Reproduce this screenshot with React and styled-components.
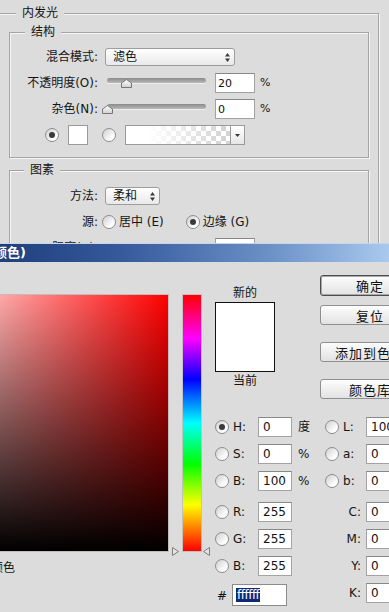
import React from "react";
import styled, { createGlobalStyle } from "styled-components";

const GlobalStyle = createGlobalStyle`
  html, body {
    margin: 0;
    padding: 0;
    overflow: hidden;
    background: #dcdcdc;
  }
  body {
    font-family: "DejaVu Sans", "Noto Sans CJK SC", sans-serif;
    font-size: 12px;
    line-height: 16px;
    color: #141414;
  }
  * { box-sizing: border-box; }
`;

const Screen = styled.div`
  width: 389px;
  height: 612px;
  overflow: hidden;
  display: flex;
  flex-direction: column;
  background: #dcdcdc;
`;

/* layer style dialog, behind the picker */

const LayerPanel = styled.section`
  flex: none;
  height: 243px;
  overflow: hidden;
  padding-top: 5px;
`;

const Group = styled.fieldset`
  margin: ${p => (p.$outer ? "0 0 0 -10px" : `${p.$mt || 0}px 0 0 0`)};
  width: ${p => (p.$outer ? 389 : 360)}px;
  min-width: 0;
  padding: ${p => p.$pad};
  border: 1px solid #a4a4a4;
  box-shadow: 1px 1px 0 #f6f6f6, inset 1px 1px 0 #f6f6f6;
`;

const Legend = styled.legend`
  margin-left: ${p => p.$offset}px;
  padding: 0 6px;
  font-size: 12px;
  line-height: 16px;
  background: #dcdcdc;
`;

const Row = styled.div`
  display: flex;
  align-items: center;
  height: 26px;
  padding-left: ${p => p.$indent || 0}px;
`;

const Label = styled.span`
  flex: none;
  width: 88px;
  margin-right: 7px;
  text-align: right;
  white-space: nowrap;
`;

const Select = styled.div`
  flex: none;
  width: ${p => p.$w}px;
  height: 18px;
  display: flex;
  align-items: center;
  justify-content: space-between;
  padding: 0 4px 0 7px;
  border: 1px solid #9d9d9d;
  border-radius: 3px;
  background: linear-gradient(#ffffff, #e9e9e9);
`;

const Track = styled.div`
  position: relative;
  flex: none;
  width: 99px;
  height: 5px;
  margin: 0 0 6px 2px;
  border-radius: 3px;
  background: linear-gradient(#8a8a8a, #b9b9b9);
  box-shadow: 0 1px 0 #efefef;
`;

const Thumb = styled.svg`
  position: absolute;
  top: 1px;
`;

const ValueBox = styled.input`
  flex: none;
  width: 40px;
  height: 20px;
  margin: 0 0 0 9px;
  padding: 0 0 0 2px;
  border: 1px solid #a2a2a2;
  border-top-color: #878787;
  background: #fff;
  font: 11px "DejaVu Sans", sans-serif;
  color: #111;
  outline: none;
`;

const Percent = styled.span`
  margin-left: 5px;
  font-size: 11px;
`;

const Radio = styled.span`
  flex: none;
  width: 14px;
  height: 14px;
  margin-left: ${p => p.$ml || 0}px;
  border-radius: 50%;
  border: 1px solid #8d8d8d;
  background: linear-gradient(135deg, #cfcfcf, #ffffff 75%);
  display: inline-flex;
  align-items: center;
  justify-content: center;
  &::after {
    content: "";
    display: ${p => (p.$checked ? "block" : "none")};
    width: 6px;
    height: 6px;
    border-radius: 50%;
    background: #3a3a3a;
  }
`;

const RadioText = styled.span`
  margin: 0 ${p => p.$mr || 0}px 0 3px;
  white-space: nowrap;
`;

const WhiteSwatch = styled.span`
  flex: none;
  width: 20px;
  height: 20px;
  margin: 0 14px 0 9px;
  border: 1px solid #9a9a9a;
  background: #fff;
`;

const GradientBox = styled.div`
  flex: none;
  display: flex;
  width: 120px;
  height: 20px;
  margin-left: 9px;
  border: 1px solid #9a9a9a;
`;

const GradientFill = styled.div`
  flex: 1;
  background:
    linear-gradient(90deg, #fff 20%, rgba(255, 255, 255, 0) 95%),
    repeating-conic-gradient(#d4d4d4 0% 25%, #ffffff 0% 50%) 0 0 / 10px 10px;
`;

const DropPart = styled.div`
  flex: none;
  width: 14px;
  display: flex;
  align-items: center;
  justify-content: center;
  border-left: 1px solid #9a9a9a;
  background: linear-gradient(#fff, #e6e6e6);
`;

/* color picker dialog */

const TitleBar = styled.header`
  flex: none;
  height: 19px;
  display: flex;
  align-items: center;
  border-top: 1px solid #c7d3e6;
  background: linear-gradient(90deg, #1f3f7c 0%, #34589a 30%, #6d92c8 70%, #a9c9ee 100%);
`;

const TitleText = styled.span`
  width: 26px;
  display: flex;
  justify-content: flex-end;
  white-space: nowrap;
  color: #fff;
  font-weight: bold;
  font-size: 13px;
`;

const PickerBody = styled.div`
  flex: 1;
  display: flex;
`;

const FieldColumn = styled.div`
  flex: none;
  width: 257px;
  margin-left: -88px;
  padding-top: 32px;
`;

const ColorField = styled.div`
  width: 257px;
  height: 258px;
  border: 1px solid #c0bcbc;
  background:
    linear-gradient(to top, #000, rgba(0, 0, 0, 0)),
    linear-gradient(to right, #fff, #f00);
`;

const WebOnly = styled.div`
  width: 103px;
  margin-top: 8px;
  text-align: right;
  white-space: nowrap;
`;

const HueColumn = styled.div`
  position: relative;
  flex: none;
  width: 43px;
  padding: 32px 0 0 13px;
`;

const HueBar = styled.div`
  width: 20px;
  height: 258px;
  border: 1px solid #c4c0c0;
  background: linear-gradient(
    #f00 0%,
    #f0f 17%,
    #00f 33%,
    #0ff 50%,
    #0f0 66%,
    #ff0 82%,
    #f00 100%
  );
`;

const HueMarker = styled.svg`
  position: absolute;
  top: 285px;
  left: ${p => p.$left}px;
`;

const Side = styled.div`
  flex: 1;
  display: flex;
  flex-direction: column;
  padding-left: 3px;
`;

const TopRow = styled.div`
  display: flex;
  align-items: flex-start;
`;

const PreviewCol = styled.div`
  flex: none;
  width: 60px;
  margin-top: 24px;
  display: flex;
  flex-direction: column;
  align-items: center;
  line-height: 14px;
`;

const Preview = styled.div`
  width: 60px;
  height: 70px;
  margin: 2px 0;
  border: 1px solid #111;
  background: #fff;
`;

const ButtonCol = styled.div`
  flex: none;
  width: 100px;
  margin-left: 45px;
  padding-top: 13px;
  display: flex;
  flex-direction: column;
`;

const Button = styled.button`
  height: ${p => (p.$primary ? 21 : 20)}px;
  margin-top: ${p => p.$mt || 0}px;
  padding: 0;
  border: 1px solid ${p => (p.$primary ? "#4d4d4d" : "#8f8f8f")};
  border-radius: 3px;
  box-shadow: ${p => (p.$primary ? "inset 0 0 0 1px #a8a8a8" : "none")};
  background: linear-gradient(#fdfdfd, #e2e2e2);
  font: 13px "Noto Sans CJK SC", sans-serif;
  letter-spacing: 1px;
  color: #111;
  white-space: nowrap;
`;

const Fields = styled.div`
  margin-top: 14px;
  display: flex;
  flex-direction: column;
`;

const FieldRow = styled.div`
  display: grid;
  grid-template-columns: 14px 29px 34px 33px 14px 27px 40px;
  align-items: center;
  height: 27px;
  margin-top: ${p => p.$gap || 0}px;
`;

const FieldName = styled.span`
  padding: ${p => (p.$right ? "0 5px 0 0" : "0 0 0 4px")};
  text-align: ${p => (p.$right ? "right" : "left")};
`;

const PickerInput = styled.input`
  width: ${p => p.$w || 34}px;
  height: 20px;
  margin: 0;
  padding: 0 0 0 4px;
  border: 1px solid #a3a3a3;
  border-top-color: #888;
  background: #fff;
  font: 12px "DejaVu Sans", sans-serif;
  color: #111;
  outline: none;
`;

const Unit = styled.span`
  padding-left: 6px;
`;

const Hash = styled.span`
  text-align: center;
  align-self: end;
  line-height: 20px;
`;

const HexBox = styled.div`
  grid-column: 2 / span 2;
  align-self: end;
  width: 55px;
  height: 22px;
  margin-left: 3px;
  padding-left: 3px;
  display: flex;
  align-items: center;
  border: 1px solid #8b8b8b;
  background: #fff;
`;

const Selected = styled.span`
  padding: 0 1px;
  line-height: 14px;
  background: #0c2a75;
  color: #fff;
  font-size: 12px;
  letter-spacing: -0.5px;
`;

const UpDown = () => (
  <svg width="5" height="9" viewBox="0 0 5 9">
    <path d="M2.5 0 L5 3.5 H0 Z M0 5.5 H5 L2.5 9 Z" fill="#3a3a3a" />
  </svg>
);

const SliderRow = ({ label, value }) => (
  <Row>
    <Label>{label}</Label>
    <Track>
      <Thumb width="11" height="9" viewBox="0 0 11 9" style={{ left: value * 0.99 - 5.5 }}>
        <defs>
          <linearGradient id="tg" x1="0" y1="0" x2="0" y2="1">
            <stop offset="0" stopColor="#ffffff" />
            <stop offset="1" stopColor="#cfcfcf" />
          </linearGradient>
        </defs>
        <path d="M5.5 0.5 L10.5 4 V8.5 H0.5 V4 Z" fill="url(#tg)" stroke="#767676" />
      </Thumb>
    </Track>
    <ValueBox readOnly value={String(value)} />
    <Percent>%</Percent>
  </Row>
);

const FieldLine = ({ checked, name, value, unit, rightRadio, rightName, rightValue, gap }) => (
  <FieldRow $gap={gap}>
    <Radio $checked={checked} />
    <FieldName>{name}:</FieldName>
    <PickerInput readOnly value={value} />
    <Unit>{unit}</Unit>
    {rightRadio ? <Radio /> : <span />}
    <FieldName $right={!rightRadio}>{rightName}:</FieldName>
    <PickerInput readOnly value={rightValue} $w={40} />
  </FieldRow>
);

export default function App() {
  return (
    <Screen>
      <GlobalStyle />
      <LayerPanel>
        <Group $outer $pad="0 9px 20px 18px">
          <Legend $offset={7}>内发光</Legend>
          <Group $mt={3} $pad="4px 0 9px 0">
            <Legend $offset={15}>结构</Legend>
            <Row>
              <Label>混合模式:</Label>
              <Select $w={130}>
                <span>滤色</span>
                <UpDown />
              </Select>
            </Row>
            <SliderRow label="不透明度(O):" value={20} />
            <SliderRow label="杂色(N):" value={0} />
            <Row $indent={35}>
              <Radio $checked />
              <WhiteSwatch />
              <Radio />
              <GradientBox>
                <GradientFill />
                <DropPart>
                  <svg width="5" height="3" viewBox="0 0 5 3">
                    <path d="M0 0 H5 L2.5 3 Z" fill="#333" />
                  </svg>
                </DropPart>
              </GradientBox>
            </Row>
          </Group>
          <Group $mt={4} $pad="5px 0 9px 0">
            <Legend $offset={14}>图素</Legend>
            <Row>
              <Label>方法:</Label>
              <Select $w={55}>
                <span>柔和</span>
                <UpDown />
              </Select>
            </Row>
            <Row>
              <Label>源:</Label>
              <Radio $ml={-3} />
              <RadioText $mr={22}>居中 (E)</RadioText>
              <Radio $checked />
              <RadioText>边缘 (G)</RadioText>
            </Row>
            <SliderRow label="阻塞(C):" value={0} />
          </Group>
        </Group>
      </LayerPanel>

      <TitleBar>
        <TitleText>拾色器 (内发光颜色)</TitleText>
      </TitleBar>

      <PickerBody>
        <FieldColumn>
          <ColorField />
          <WebOnly>只有 Web 颜色</WebOnly>
        </FieldColumn>

        <HueColumn>
          <HueBar />
          <HueMarker $left={3} width="7" height="9" viewBox="0 0 7 9">
            <path d="M0.5 0.5 L6.5 4.5 L0.5 8.5 Z" fill="#e4e4e4" stroke="#7d7d7d" />
          </HueMarker>
          <HueMarker $left={34} width="7" height="9" viewBox="0 0 7 9">
            <path d="M6.5 0.5 L0.5 4.5 L6.5 8.5 Z" fill="#e4e4e4" stroke="#7d7d7d" />
          </HueMarker>
        </HueColumn>

        <Side>
          <TopRow>
            <PreviewCol>
              <span>新的</span>
              <Preview />
              <span>当前</span>
            </PreviewCol>
            <ButtonCol>
              <Button $primary>确定</Button>
              <Button $mt={9}>复位</Button>
              <Button $mt={17}>添加到色板</Button>
              <Button $mt={17}>颜色库</Button>
            </ButtonCol>
          </TopRow>

          <Fields>
            <FieldLine checked name="H" value="0" unit="度" rightRadio rightName="L" rightValue="100" />
            <FieldLine name="S" value="0" unit="%" rightRadio rightName="a" rightValue="0" />
            <FieldLine name="B" value="100" unit="%" rightRadio rightName="b" rightValue="0" />
            <FieldLine gap={4} name="R" value="255" rightName="C" rightValue="0" />
            <FieldLine name="G" value="255" rightName="M" rightValue="0" />
            <FieldLine name="B" value="255" rightName="Y" rightValue="0" />
            <FieldRow>
              <Hash>#</Hash>
              <HexBox>
                <Selected>ffffff</Selected>
              </HexBox>
              <span />
              <span />
              <FieldName $right>K:</FieldName>
              <PickerInput readOnly value="0" $w={40} />
            </FieldRow>
          </Fields>
        </Side>
      </PickerBody>
    </Screen>
  );
}
